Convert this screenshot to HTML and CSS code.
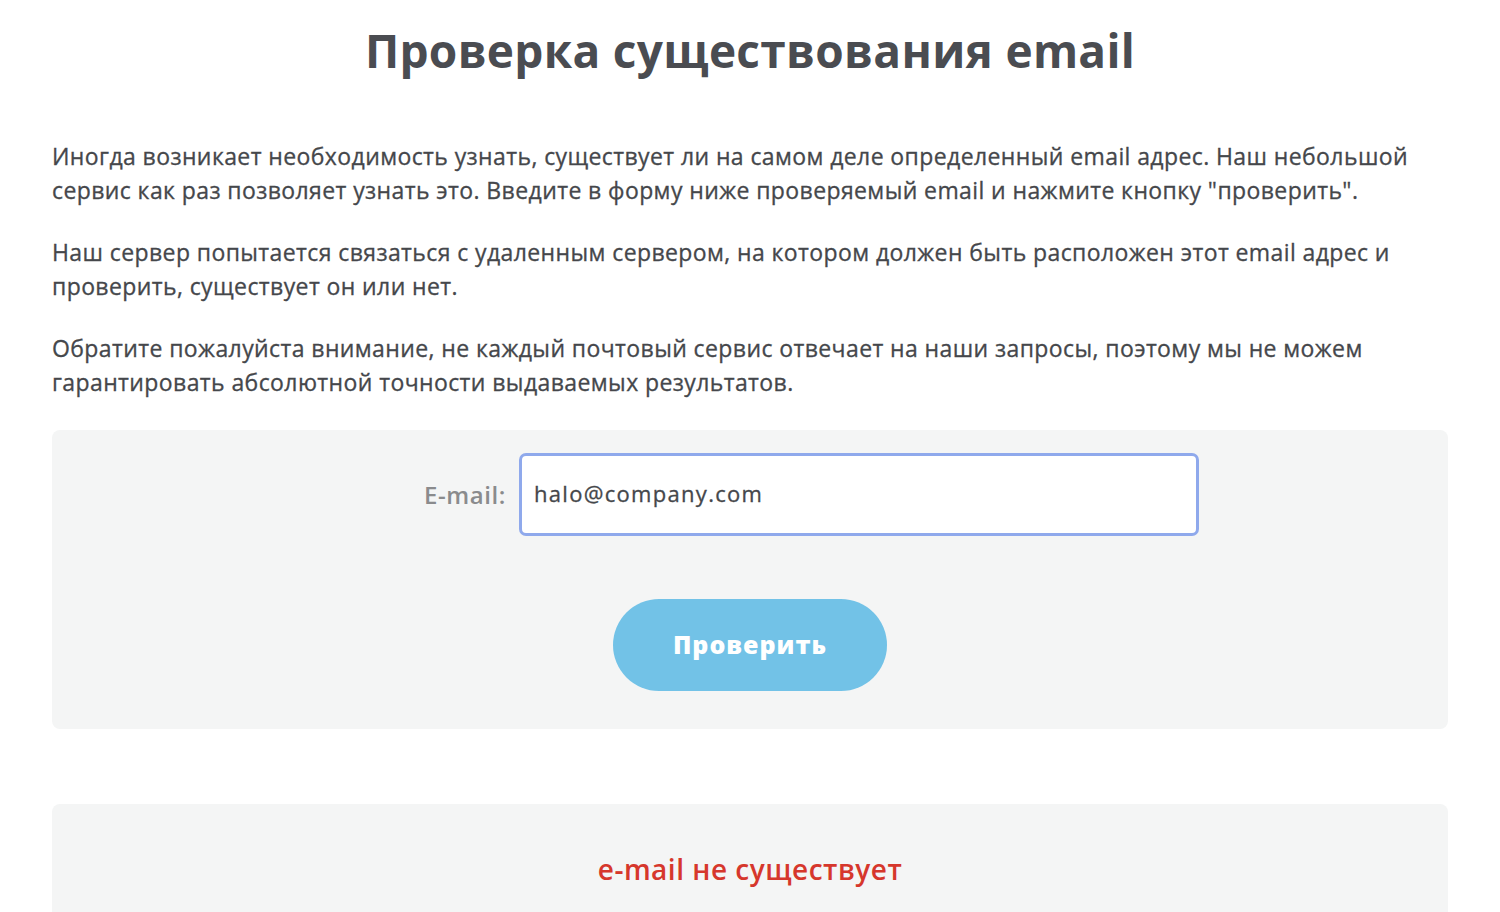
FILE: index.html
```html
<!DOCTYPE html>
<html lang="ru">
<head>
  <meta charset="UTF-8">
  <title>Проверка существования email</title>
  <link rel="stylesheet" href="styles.css">
</head>
<body>

<div class="container">
  <h1>Проверка существования email</h1>

  <p>Иногда возникает необходимость узнать, существует ли на самом деле определенный email адрес. Наш небольшой сервис как раз позволяет узнать это. Введите в форму ниже проверяемый email и нажмите кнопку "проверить".</p>

  <p>Наш сервер попытается связаться с удаленным сервером, на котором должен быть расположен этот email адрес и проверить, существует он или нет.</p>

  <p>Обратите пожалуйста внимание, не каждый почтовый сервис отвечает на наши запросы, поэтому мы не можем гарантировать абсолютной точности выдаваемых результатов.</p>

  <form class="check-form">
    <div class="form-row">
      <label for="email">E-mail:</label>
      <input type="text" id="email" value="halo@company.com">
    </div>
    <button type="button" class="btn">Проверить</button>
  </form>

  <div class="result">
    <span class="result-text">e-mail не существует</span>
  </div>
</div>

</body>
</html>
```

FILE: styles.css
```css
body {
  font-family: "Open Sans", "Noto Sans", sans-serif;
  background: #fff;
  color: #45474b;
  margin: 0;
}
.container {
  width: 1396px;
  margin: 0 auto;
}
h1 {
  text-align: center;
  font-size: 46px;
  font-weight: 700;
  letter-spacing: 0.3px;
  color: #4a4c51;
  margin: 20px 0 60px;
  line-height: 60px;
}
p {
  font-size: 23px;
  letter-spacing: 0.4px;
  line-height: 33.5px;
  margin: 0 0 29px;
  -webkit-text-stroke: 0.3px #45474b;
}
.check-form {
  background: #f4f5f5;
  border-radius: 8px;
  margin-top: 31px;
  padding: 23px 0 38px;
}
.form-row {
  display: flex;
  align-items: center;
}
.form-row label {
  width: 454px;
  text-align: right;
  padding-right: 13px;
  font-size: 24px;
  font-weight: 600;
  letter-spacing: 0.6px;
  color: #8a8b8d;
}
.form-row input {
  width: 680px;
  height: 83px;
  box-sizing: border-box;
  border: 3px solid #8fa9ec;
  border-radius: 7px;
  padding: 0 12px 4px;
  font-family: inherit;
  font-size: 22px;
  letter-spacing: 1.3px;
  color: #45474b;
  -webkit-text-stroke: 0.3px #45474b;
  background: #fff;
  outline: none;
}
.btn {
  display: block;
  margin: 63px auto 0;
  width: 274px;
  height: 92px;
  border: none;
  border-radius: 46px;
  background: #72c2e7;
  color: #fff;
  font-family: inherit;
  font-size: 25px;
  font-weight: 800;
  letter-spacing: 1px;
  padding-bottom: 4px;
  cursor: pointer;
}
.result {
  background: #f4f5f5;
  border-radius: 8px;
  margin-top: 75px;
  height: 140px;
  padding-top: 46px;
  box-sizing: border-box;
  text-align: center;
}
.result-text {
  font-size: 28px;
  font-weight: 600;
  letter-spacing: 0.5px;
  color: #d6372c;
}
```
